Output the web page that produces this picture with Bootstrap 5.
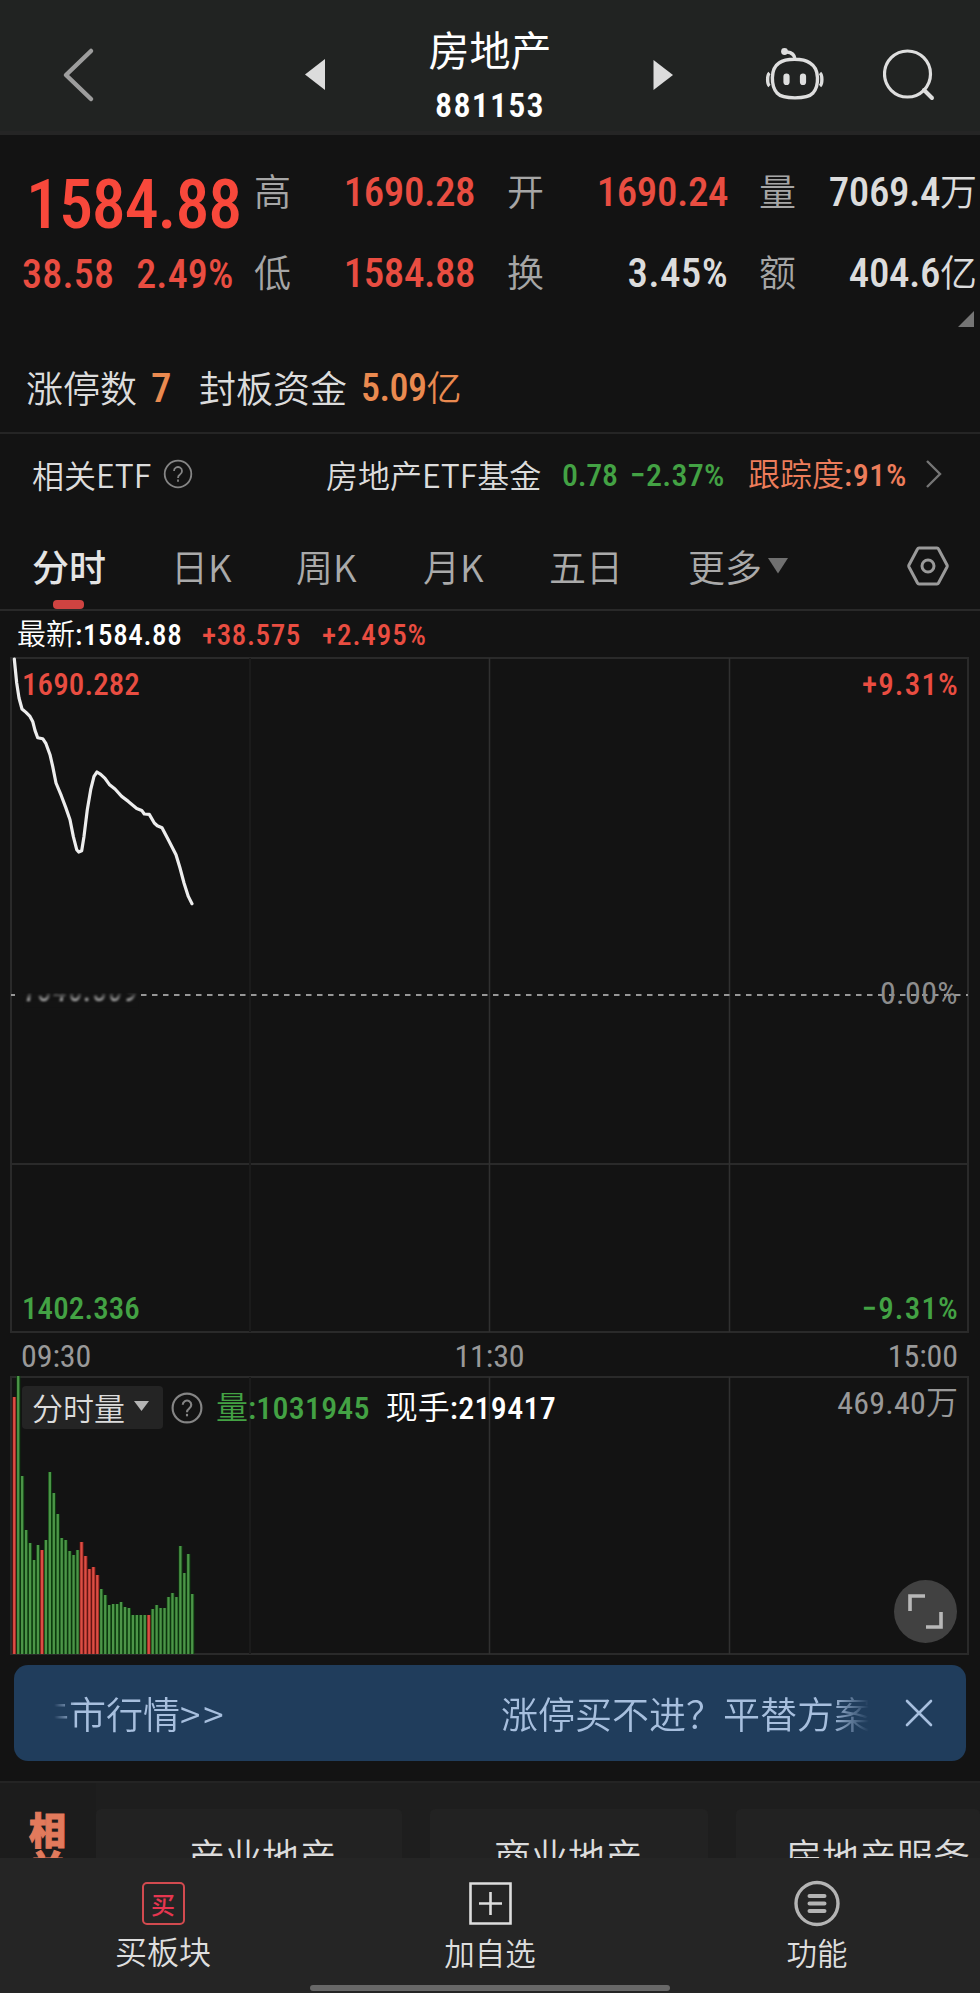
<!DOCTYPE html>
<html lang="zh-CN">
<head>
<meta charset="utf-8">
<meta name="viewport" content="width=device-width, initial-scale=1">
<title>房地产 881153</title>
<link href="https://cdn.jsdelivr.net/npm/bootstrap@5.3.0/dist/css/bootstrap.min.css" rel="stylesheet">
<style>
:root{--up:#e94d41;--down:#43a244;--orange:#ea8a50;--muted:#a6a6a6}
body{background:#131313;color:#dcdcdc;font-family:"Noto Sans CJK SC",sans-serif;font-size:37px;font-weight:350;line-height:1;width:980px;height:1993px;overflow:hidden;white-space:nowrap}
svg{display:block;flex:none}
.num{font-family:"Roboto Condensed","Noto Sans CJK SC",sans-serif;font-weight:500}
.num .cn{font-weight:350;letter-spacing:0}
.up{color:var(--up)}.down{color:var(--down)}.orange{color:var(--orange)}.muted{color:var(--muted)}
.line-row{display:grid;align-items:center;justify-items:start}

.top-bar{height:135px;background:#212322;border-bottom:4px solid #252525;grid-template-columns:61px 243px 120px 228px 113px 118px 1fr}
.top-bar svg{margin-top:18px}
.stock-name{font-size:41px;color:#fff;font-weight:400}
.stock-code{font-size:34px;color:#fff;font-weight:600;letter-spacing:1.2px}

.quote{height:184px;display:grid;grid-template-columns:254px 221px 32px 221px 31px 218px;grid-template-rows:115px 47px;align-items:center;position:relative}
.quote .num{font-size:41px;letter-spacing:-.45px}
.quote .num small{font-size:37px;font-weight:350;letter-spacing:0}
.quote .last-price{font-size:68px;letter-spacing:-1.1px;padding:24px 0 0 26px;color:#f8483b}
.quote .chg{font-size:40px;letter-spacing:.2px;padding:3px 0 0 22px;gap:22px}
.corner{position:absolute;right:6px;bottom:-8px}

.limits{height:115px;grid-template-columns:26px 125px 48px 162px 1fr;padding-top:23px;border-bottom:2px solid #252525}
.limits .num{padding-top:2px}
.etf-row{height:88px;font-size:32px;grid-template-columns:32px 131px 163px 236px 68px 118px 177px 1fr;padding-bottom:8px}
.etf-row .num{padding-top:2px}
.tabs-row{height:88px;margin-top:1px;border-bottom:2px solid #292929;grid-template-columns:32px 139px 125px 127px 126px 139px 80px 139px 1fr;color:#aaa;position:relative}
.tab-on{font-weight:500;color:#e4e4e4}
.tab-mark{position:absolute;left:53px;bottom:0;width:31px;height:9px;border-radius:4px;background:#cf4341}
.latest{height:46px;font-size:29px;grid-template-columns:17px 185px 120px 1fr;padding-top:3px;letter-spacing:.6px}

.price-box{position:relative;height:676px;margin:0 11px 0 10px;padding:12px 11px 9px 12px;font-size:31px;letter-spacing:.1px}
.price-box>svg,.vol-box>svg{position:absolute;left:0;top:0}
.price-box .lab{position:relative}
.pct{letter-spacing:1.2px;margin-right:-1px}
.ghost{font-size:29px;color:#d0d0d0;letter-spacing:1.4px;filter:blur(1.3px);-webkit-mask-image:linear-gradient(transparent 48%,#000 80%);mask-image:linear-gradient(transparent 48%,#000 80%);background:#131313}
.times{height:43px;font-size:32px;padding:2px 22px 0 21px;color:#999;letter-spacing:-.1px}
.vol-box{position:relative;height:279px;margin:0 11px 0 10px;padding-right:11px}
.vol-head{position:relative;padding:10px 0 0 12px;font-size:32px}
.vol-head .num{font-size:32px;letter-spacing:.2px}
.vol-btn{width:141px;height:43px;border-radius:4px;background:#242424;padding:0 0 3px 10px;font-size:31px}
.expand{position:absolute;right:12px;bottom:12px;width:63px;height:63px;background:#414141}

.promo{height:96px;margin:10px 14px 0;border-radius:14px;background:#203d5c;color:#a7bfde}
.promo .belt{width:822px;margin-left:37px;-webkit-mask-image:linear-gradient(90deg,transparent 3px,#000 24px,#000 780px,transparent 818px);mask-image:linear-gradient(90deg,transparent 3px,#000 24px,#000 780px,transparent 818px);overflow:hidden;height:50px}
.belt-out{margin-left:-19px}

.related{margin-top:20px;height:77px;background:#1e1e1e;overflow:hidden;grid-template-columns:96px 306px 28px 278px 28px 244px;border-top:2px solid #242424;align-items:start}
.related-tag{width:96px;height:77px;background:#1c1c1c;color:#e27a5c;font-weight:900;font-size:37px;line-height:38px;padding:27px 0 0 29px;-webkit-text-stroke:1px #e27a5c}
.related-tag span{display:block}
.rel-card{height:90px;margin-top:26px;background:#222;border-radius:5px;padding-top:28px;width:100%}
.bottom-nav{height:136px;background:#252525;position:relative;font-size:32px;color:#dedede}
.bottom-nav .item{width:326px;padding-top:24px;gap:9px}
.home-line{position:absolute;left:310px;bottom:3px;width:360px;height:6px;border-radius:3px;background:#686868}
.buy-box{width:43px;height:43px;border:2.5px solid #d24a4f;border-radius:5px;color:#e63650;font-size:24px;font-weight:500}
</style>
</head>
<body>

<header class="top-bar line-row">
  <span></span>
  <svg width="36" height="56" viewBox="0 0 36 56"><path d="M30 4 5 28 30 52" fill="none" stroke="#9d9d9d" stroke-width="4.5" stroke-linecap="round" stroke-linejoin="round"/></svg>
  <svg width="24" height="34"><path d="M21 1v31L1 16.500z" fill="#dcdcdc"/></svg>
  <div class="d-flex flex-column align-items-center" style="width:132px;gap:19px;padding-top:19px">
    <span class="stock-name">房地产</span><span class="stock-code num">881153</span>
  </div>
  <svg width="24" height="34"><path d="M1.500 2v30L21 17z" fill="#dcdcdc"/></svg>
  <svg width="60" height="56" viewBox="0 0 60 56" fill="none" stroke="#dedede" stroke-width="3.400"><path d="M14 16C21 11 38 11 45 16 55 22 54 39 48 46 42 52.500 18 52.500 12 46 6 39 5 22 14 16zM30 12C29.500 8 27 5.500 22 5"/><circle cx="19.500" cy="4.500" r="3.400" fill="#dedede" stroke="none"/><path d="M4.500 26C2 28 2 37 4.500 39M55 26C57.500 28 57.500 37 55 39" stroke-width="3.400"/><path d="M21.500 29.500v5.500M38 29.500v5.500" stroke-width="6.200" stroke-linecap="round"/></svg>
  <svg width="54" height="54" viewBox="0 0 54 54" fill="none" stroke="#dedede" stroke-width="3.200" stroke-linecap="round"><circle cx="24.500" cy="26" r="23"/><path d="M41 42l8 8" stroke-width="4"/></svg>
</header>

<section class="quote">
  <span class="num last-price">1584.88</span>
  <div class="d-flex justify-content-between"><span class="muted">高</span><span class="num up">1690.28</span></div><span></span>
  <div class="d-flex justify-content-between"><span class="muted">开</span><span class="num up">1690.24</span></div><span></span>
  <div class="d-flex justify-content-between"><span class="muted">量</span><span class="num">7069.4<small>万</small></span></div>
  <div class="num up chg d-flex"><span>38.58</span><span>2.49%</span></div>
  <div class="d-flex justify-content-between"><span class="muted">低</span><span class="num up">1584.88</span></div><span></span>
  <div class="d-flex justify-content-between"><span class="muted">换</span><span class="num" style="letter-spacing:.3px">3.45%</span></div><span></span>
  <div class="d-flex justify-content-between"><span class="muted">额</span><span class="num">404.6<small>亿</small></span></div>
  <svg class="corner" width="16" height="16"><path d="M16 0v16H0z" fill="#757575"/></svg>
</section>

<section class="limits line-row">
  <span></span><span>涨停数</span><span class="num orange" style="font-size:41px">7</span><span>封板资金</span><span class="num orange" style="font-size:38px;letter-spacing:-.5px">5.09<span class="cn" style="font-size:35px">亿</span></span>
</section>

<section class="etf-row line-row">
  <span></span><span>相关ETF</span>
  <svg width="30" height="30" viewBox="0 0 30 30" fill="none" stroke="#858585" stroke-width="1.800"><circle cx="15" cy="15" r="13.300"/><path d="M11 12a4 4 0 1 1 6 3.500c-1.500 1-2 1.700-2 3.500"/><path d="M15 20.500v2.300"/></svg>
  <span>房地产ETF基金</span><span class="num down" style="font-size:32px;letter-spacing:-.3px">0.78</span><span class="num down" style="font-size:32px;letter-spacing:.3px">−2.37%</span><span class="num" style="color:#ed7d5b;letter-spacing:.6px"><span class="cn">跟踪度</span>:91%</span>
  <svg width="18" height="30"><path d="M2 2l13 13L2 28" fill="none" stroke="#757575" stroke-width="2.400"/></svg>
</section>

<nav class="tabs-row line-row">
  <span></span><span class="tab-on">分时</span><span>日K</span><span>周K</span><span>月K</span><span>五日</span><span>更多</span>
  <svg width="20" height="16"><path d="M0 0h20L10 15.500z" fill="#707070"/></svg>
  <svg width="42" height="40" viewBox="0 0 42 40" fill="none" stroke="#9a9a9a" stroke-width="3"><path d="M12 2h18q1 0 1.500 1l8.500 16q.5 1 0 2l-8.500 16q-.5 1-1.500 1H12q-1 0-1.500-1L2 21q-.5-1 0-2l8.500-16q.5-1 1.500-1z"/><circle cx="21" cy="20" r="6"/></svg>
  <i class="tab-mark"></i>
</nav>

<div class="latest line-row">
  <span></span><span class="num text-white"><span class="cn">最新</span>:1584.88</span><span class="num up">+38.575</span><span class="num up" style="letter-spacing:.9px">+2.495%</span>
</div>

<section class="price-box d-flex flex-column justify-content-between num">
  <svg width="959" height="676" fill="none">
    <g stroke="#2a2a2a" stroke-width="2"><path d="M1 1h957v674H1zM1 507h957"/><path d="M240 1v674" stroke="#1b1b1b"/><path d="M479.500 1v674M719.500 1v674" stroke-width="1.500" stroke="#303030"/></g>
    <path d="M1 338h4M131 338H958" stroke="#979797" stroke-width="2" stroke-dasharray="5.500 5.500"/>
    <polyline id="priceLine" stroke="#ededed" stroke-width="3.200" stroke-linejoin="round" stroke-linecap="round"/>
  </svg>
  <div class="lab d-flex justify-content-between up"><span>1690.282</span><span class="pct">+9.31%</span></div>
  <div class="lab d-flex justify-content-between mb-2"><span class="ghost fst-italic">1546.309</span><span style="color:#8d8d8d;font-weight:400;font-size:32px;letter-spacing:.4px">0.00%</span></div>
  <div class="lab d-flex justify-content-between down"><span>1402.336</span><span class="pct">−9.31%</span></div>
</section>

<div class="times num d-flex justify-content-between align-items-center" style="font-weight:400"><span>09:30</span><span>11:30</span><span>15:00</span></div>

<section class="vol-box">
  <svg width="959" height="279" fill="none">
    <g stroke="#2a2a2a" stroke-width="2"><path d="M1 1h957v277H1z"/><path d="M240 1v277" stroke="#1b1b1b"/><path d="M479.500 1v277M719.500 1v277" stroke-width="1.500" stroke="#303030"/></g>
    <g id="bars"></g>
  </svg>
  <div class="vol-head d-flex align-items-center">
    <div class="vol-btn d-flex align-items-center">分时量<svg class="ms-2" width="17" height="11"><path d="M1 0h15L8.500 10z" fill="#b5b5b5"/></svg></div>
    <svg class="ms-2" width="32" height="32" viewBox="0 0 30 30" fill="none" stroke="#858585" stroke-width="2"><circle cx="15" cy="15" r="13.500"/><path d="M11 12a4 4 0 1 1 6 3.500c-1.500 1-2 1.700-2 3.500"/><path d="M15 20.500v2.300"/></svg>
    <span class="num down" style="margin-left:13px"><span class="cn">量</span>:1031945</span>
    <span class="num text-white" style="margin-left:16px;letter-spacing:.3px"><span class="cn">现手</span>:219417</span>
    <span class="num ms-auto" style="color:#999;margin-top:-10px;font-weight:400"><span>469.40</span><span class="cn">万</span></span>
  </div>
  <div class="expand rounded-circle d-flex align-items-center justify-content-center"><svg width="35" height="35" fill="none" stroke="#b8b8b8" stroke-width="3.600"><path d="M2 17V2h15M33 18v15H18"/></svg></div>
</section>

<aside class="promo d-flex align-items-center">
  <div class="belt d-flex align-items-center"><span class="belt-out">牛市行情<span style="letter-spacing:3px">&gt;&gt;</span></span><span class="ms-auto" style="margin-right:2px">涨停买不进？平替方案</span></div>
  <svg width="28" height="28" style="margin-left:32px"><path d="M2 2l24 24M26 2 2 26" stroke="#a7bfde" stroke-width="2.600" stroke-linecap="round"/></svg>
</aside>

<section class="related line-row">
  <div class="related-tag"><span>相</span><span>关</span></div>
  <div class="rel-card" style="padding-left:92px">产业地产</div><span></span>
  <div class="rel-card" style="padding-left:64px">商业地产</div><span></span>
  <div class="rel-card" style="padding-left:49px">房地产服务</div>
</section>

<nav class="bottom-nav d-flex justify-content-between">
  <div class="item d-flex flex-column align-items-center"><div class="buy-box d-flex align-items-center justify-content-center">买</div><span>买板块</span></div>
  <div class="item d-flex flex-column align-items-center"><svg width="43" height="43" fill="none" stroke="#dedede" stroke-width="2.600"><path d="M1.500 1.500h40v40h-40zM21.500 10v23M10 21.500h23"/></svg><span style="font-size:30.500px;margin-top:3px">加自选</span></div>
  <div class="item d-flex flex-column align-items-center"><svg width="46" height="43" viewBox="0 0 46 43" overflow="visible" fill="none" stroke="#b4b4b4"><circle cx="23" cy="21.500" r="21" stroke-width="3.400"/><path d="M15.500 14h15M15.500 21.500h15M15.500 29h15" stroke-width="4" stroke-linecap="round"/></svg><span style="font-size:30.500px;margin-top:3px">功能</span></div>
  <i class="home-line"></i>
</nav>

<script src="https://cdn.jsdelivr.net/npm/bootstrap@5.3.0/dist/js/bootstrap.bundle.min.js"></script>
<script>
// minute prices as [x, y] on the chart, in thirds of a pixel
const line=[[43,4],[50,76],[57,121],[66,154],[78,164],[90,176],[98,191],[105,218],[113,240],[128,243],[138,258],[150,291],[158,326],[168,376],[184,414],[197,449],[210,486],[220,536],[230,576],[236,583],[245,579],[252,536],[262,456],[272,396],[282,356],[291,343],[302,350],[315,362],[328,380],[345,394],[365,416],[385,431],[410,452],[425,458],[433,469],[448,470],[463,496],[472,504],[486,510],[505,546],[528,591],[540,631],[552,676],[565,716],[576,738]];
document.getElementById('priceLine').setAttribute('points',line.map(p=>(p[0]/3-10).toFixed(1)+','+(p[1]/3+.7).toFixed(1)).join(' '));
// minute volumes; negative values are drawn in red
const vols=[-257,278,178,124,111,94,109,-104,114,182,161,140,116,114,103,99,104,-112,-98,-85,-87,-79,65,59,49,50,50,52,47,46,39,39,39,39,-39,45,49,46,46,57,61,57,108,81,100,60];
document.getElementById('bars').innerHTML=vols.map((v,i)=>{const h=Math.abs(v),x=(2.4+i*3.955).toFixed(2);return `<rect x="${x}" y="${278-h}" width="3.96" height="${h}" fill="${v<0?'#7a1714':'#0c3f0e'}"/><rect x="${(+x+.7).toFixed(2)}" y="${278-h}" width="2.3" height="${h}" fill="${v<0?'#db4f45':'#4c9548'}"/>`}).join('');
</script>
</body>
</html>
